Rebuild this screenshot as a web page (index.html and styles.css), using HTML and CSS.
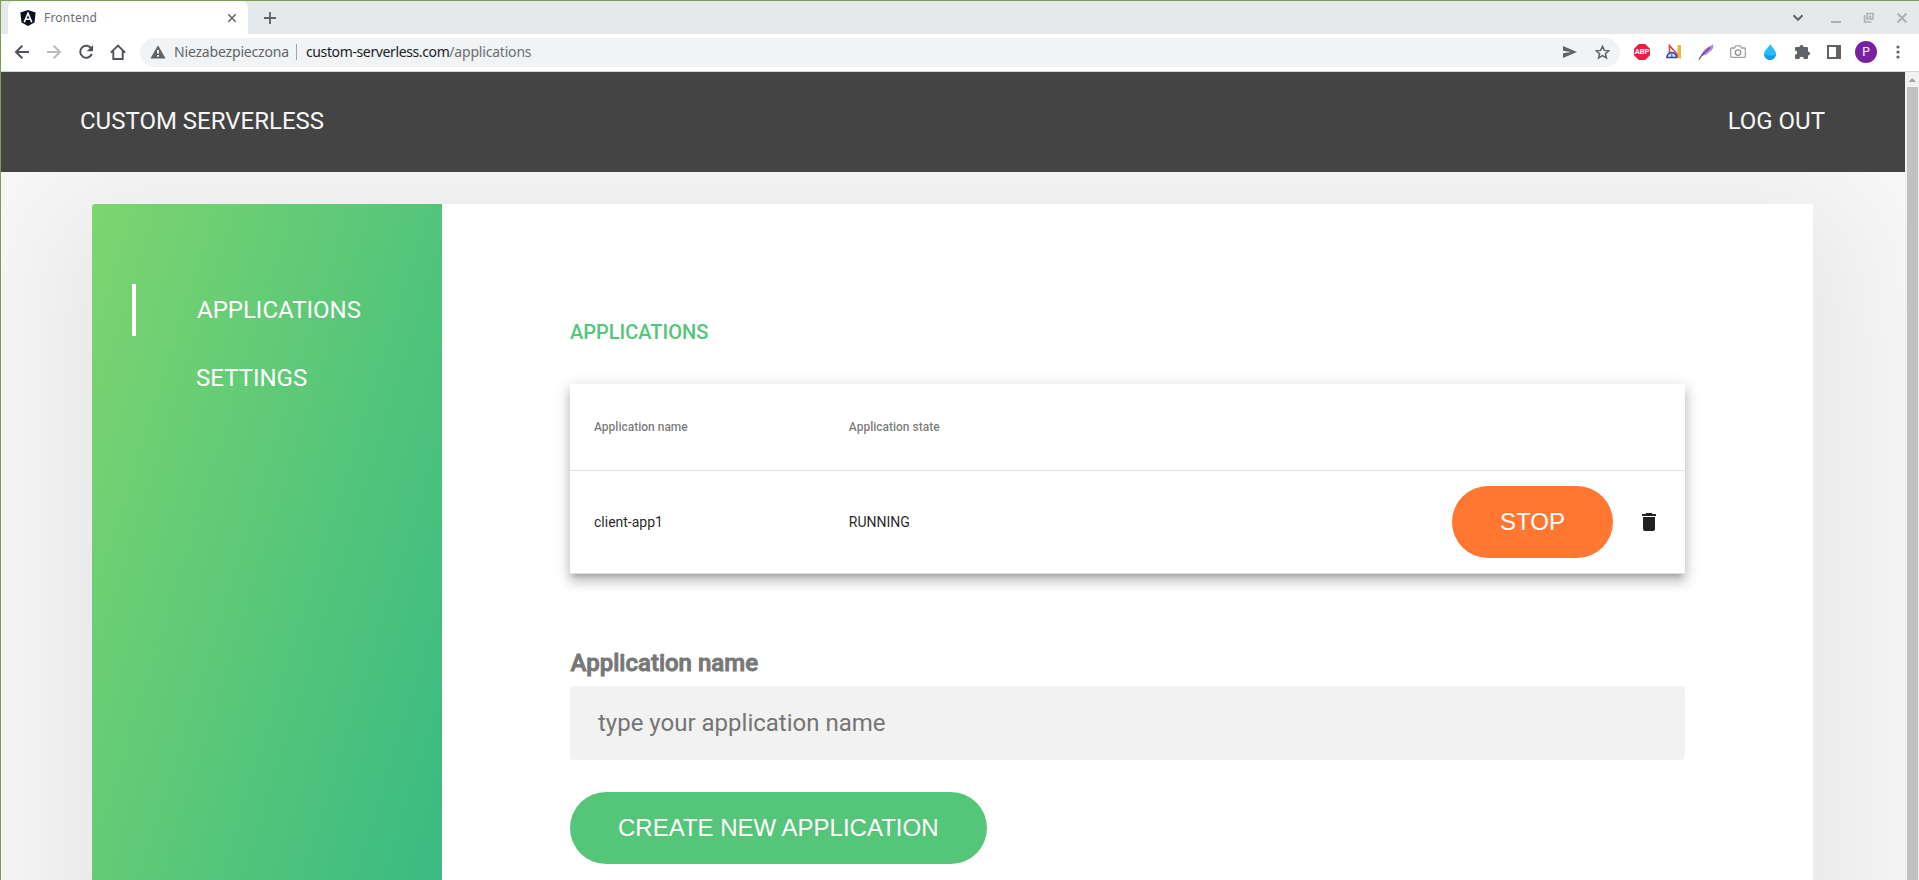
FILE: index.html
```html
<!DOCTYPE html>
<html lang="pl">
<head>
<meta charset="utf-8">
<title>Frontend</title>
<link rel="stylesheet" href="styles.css">
</head>
<body>
<div class="window">
  <div class="tabstrip">
    <div class="tab">
      <svg class="tab-logo" width="16" height="16" viewBox="0 0 16 16"><path d="M8 0l7.600 2.600-1.100 10L8 16l-6.500-3.400L.4 2.600z" fill="#0b0f1c"/><path d="M4.200 12.200L8 3.200l3.800 9M5.700 9.300h4.600" fill="none" stroke="#fff" stroke-width="1.600"/></svg>
      <span class="tab-title">Frontend</span>
      <svg class="tab-close" width="10" height="10" viewBox="0 0 10 10"><path d="M1.300 1.300l7.400 7.400M8.700 1.300L1.300 8.700" stroke="#5f6368" stroke-width="1.500"/></svg>
    </div>
    <svg class="newtab" width="12" height="12" viewBox="0 0 12 12"><path d="M6 0v12M0 6h12" stroke="#5f6368" stroke-width="1.800"/></svg>
    <div class="controls">
      <svg width="12" height="12" viewBox="0 0 12 12"><path d="M1.500 3.300L6 7.800l4.500-4.500" fill="none" stroke="#5f6368" stroke-width="2"/></svg>
      <svg width="12" height="12" viewBox="0 0 12 12"><path d="M1 10h10" stroke="#aeb1b4" stroke-width="2"/></svg>
      <svg width="12" height="12" viewBox="0 0 12 12"><path d="M4 1.500h6v5.500H4zM1.500 3V10H8.500M6.500 3.500v1.500h2" fill="none" stroke="#aeb1b4" stroke-width="1.600"/></svg>
      <svg width="12" height="12" viewBox="0 0 12 12"><path d="M1.500 1.500l9 9M10.500 1.500l-9 9" stroke="#aeb1b4" stroke-width="2"/></svg>
    </div>
  </div>
  <div class="toolbar">
    <div class="nav-icons">
      <svg width="16" height="16" viewBox="0 0 16 16"><path d="M15 8H2.500M8.300 1.700L2 8l6.300 6.300" fill="none" stroke="#50545a" stroke-width="2"/></svg>
      <svg width="16" height="16" viewBox="0 0 16 16"><path d="M1 8h12.500M7.700 1.700L14 8l-6.300 6.300" fill="none" stroke="#babcbe" stroke-width="2"/></svg>
      <svg width="16" height="16" viewBox="0 0 16 16"><path d="M13.300 4.500A6 6 0 1 0 13.800 10" fill="none" stroke="#50545a" stroke-width="2"/><path d="M15 1v6.300H8.700z" fill="#50545a"/></svg>
      <svg width="16" height="16" viewBox="0 0 16 16"><path d="M.8 8.700L8 1.500l7.200 7.200M3.300 7v8h9.400V7" fill="none" stroke="#50545a" stroke-width="1.900"/></svg>
    </div>
    <div class="omnibox">
      <svg class="warn" width="16" height="14" viewBox="0 0 16 14"><path d="M8 .3L15.600 13.500H.4z" fill="#5f6368"/><path d="M8 5v3.500M8 10v1.800" stroke="#fff" stroke-width="1.800"/></svg>
      <span class="insecure">Niezabezpieczona</span>
      <span class="sep"></span>
      <span class="host">custom-serverless.com</span><span class="path">/applications</span>
      <svg class="send" width="14" height="12" viewBox="0 0 14 12"><path d="M0 0l14 6L0 12V7.300L8 6 0 4.700z" fill="#5f6368"/></svg>
      <svg width="15" height="15" viewBox="0 0 15 15"><path d="M7.500 1.400l1.800 4 4.400.4-3.300 2.900 1 4.300-3.900-2.300L3.600 13l1-4.300L1.300 5.800l4.400-.4z" fill="none" stroke="#5f6368" stroke-width="1.500"/></svg>
    </div>
    <div class="extensions">
      <span class="abp">ABP</span>
      <svg width="16" height="16" viewBox="0 0 16 16"><path d="M3.500 1.500v11h9.500z" fill="#fff" stroke="#d9434a" stroke-width="1.600"/><path d="M11.500 1h3.500v13.500h-3.500z" fill="#e8b93c"/><path d="M1 13.500a4.800 4.800 0 0 1 9.600 0z" fill="#dfe8fb" stroke="#2747a0" stroke-width="1.700"/><path d="M5.800 10v3.500" stroke="#2747a0"/></svg>
      <svg width="16" height="16" viewBox="0 0 16 16"><path d="M15.300.3c.5 3.200-.8 5.700-3.300 7.300l-3.600 3-4.900 1.600c.2-3.500 1.800-6.200 5-8.300z" fill="#b58bd8"/><path d="M1 15.500L4 11l8-7.500" fill="none" stroke="#6b3d95" stroke-width="1.300"/></svg>
      <svg width="16" height="16" viewBox="0 0 16 16"><path d="M1.800 4h2.700l1.200-2.200h4.600L11.500 4h2.700q1.200 0 1.200 1.200v7q0 1.200-1.200 1.200H1.800Q.6 13.400.6 12.200v-7Q.6 4 1.800 4z" fill="#fff" stroke="#a1a3a6" stroke-width="1.300"/><circle cx="8" cy="8.600" r="2.700" fill="none" stroke="#909396" stroke-width="1.300"/></svg>
      <svg width="16" height="16" viewBox="0 0 16 16"><path d="M8.300.2C10.500 4 14 6.300 14 10a6 5.900 0 0 1-12 0C2 6.300 6.200 4 8.300.2z" fill="#28bdf5"/><path d="M2 10a6 5.900 0 0 0 12 0c-3 2.500-8 2-12 0z" fill="#159be8"/></svg>
      <svg width="16" height="16" viewBox="0 0 16 16"><path d="M1 4q0-1 1-1h3.500a2 2 0 1 1 4 0H13q1 0 1 1v3.500a2 2 0 1 1 0 4V14q0 1-1 1H9.800a2.200 2.200 0 1 0-4.400 0H2q-1 0-1-1v-3.200a2.200 2.200 0 1 0 0-4.400z" fill="#5f6368"/></svg>
      <svg width="16" height="16" viewBox="0 0 16 16"><path d="M1 1h14v14H1z" fill="#5f6368"/><path d="M3 3h7v10H3z" fill="#fff"/></svg>
      <span class="avatar">P</span>
      <svg class="dots" width="4" height="14" viewBox="0 0 4 14"><circle cx="2" cy="2" r="1.600"/><circle cx="2" cy="7" r="1.600"/><circle cx="2" cy="12" r="1.600"/></svg>
    </div>
  </div>
  <div class="viewport">
    <div class="page">
      <header class="header"><a>CUSTOM SERVERLESS</a><a>LOG OUT</a></header>
      <main class="card">
        <nav class="menu">
          <a class="menu-item active">APPLICATIONS</a>
          <a class="menu-item">SETTINGS</a>
        </nav>
        <section class="content">
          <h2 class="heading">APPLICATIONS</h2>
          <div class="table">
            <div class="row head"><span>Application name</span><span>Application state</span></div>
            <div class="row">
              <span>client-app1</span><span>RUNNING</span>
              <button class="btn stop">STOP</button>
              <svg width="24" height="24" viewBox="0 0 24 24"><path d="M6 19c0 1.100.9 2 2 2h8c1.100 0 2-.9 2-2V7H6v12zM19 4h-3.500l-1-1h-5l-1 1H5v2h14V4z" fill="#212121"/></svg>
            </div>
          </div>
          <label class="label" for="name">Application name</label>
          <input class="input" id="name" placeholder="type your application name">
          <button class="btn create">CREATE NEW APPLICATION</button>
        </section>
      </main>
    </div>
    <div class="scrollbar">
      <svg width="14" height="15" viewBox="0 0 14 15"><path d="M3.500 10h7.500L7.200 6z" fill="#a3a3a3"/></svg>
      <div class="thumb"></div>
    </div>
  </div>
</div>
</body>
</html>
```
FILE: styles.css
```css
* { box-sizing: border-box; margin: 0; padding: 0; }
body { height: 880px; overflow: hidden; font-family: Roboto, sans-serif; }
svg { display: block; flex: none; }
.window { height: 880px; display: flex; flex-direction: column; border-left: 1px solid #7a9f52; border-top: 1px solid #7a9f52; }

.tabstrip { height: 33px; display: flex; align-items: center; background: #e5e9ec; padding-left: 7px; flex: none; }
.tab { width: 240px; height: 33px; background: #fff; border-radius: 7px 7px 0 0; display: flex; align-items: center; padding: 0 11px 0 12px; }
.tab-title { margin-left: 8px; flex: 1; font: 12px "Noto Sans", sans-serif; color: #6b6e72; letter-spacing: 0.2px; }
.newtab { margin-left: 16px; }
.controls { margin-left: auto; display: flex; padding-right: 11px; gap: 21px; }
.controls svg:first-child { margin-right: 5px; }

.toolbar { height: 38px; display: flex; align-items: center; background: #fff; border-bottom: 1px solid #d4d6d8; flex: none; padding: 0 0 1px 13px; }
.nav-icons { display: flex; gap: 16px; }
.omnibox { margin-left: 14px; width: 1480px; height: 29px; border-radius: 15px; background: #f1f3f4; display: flex; align-items: center; padding: 0 10px; font: 14px/28px "Noto Sans", sans-serif; }
.warn { margin-right: 8px; }
.insecure { color: #5f6368; width: 114px; white-space: nowrap; letter-spacing: -0.18px; }
.sep { width: 1px; height: 16px; background: #a0a3a6; margin: 0 9px 0 8px; }
.host { color: #202124; letter-spacing: -0.38px; }
.path { color: #6b6e72; letter-spacing: -0.2px; }
.send { margin-left: auto; margin-right: 18px; }
.extensions { display: flex; align-items: center; gap: 16px; margin-left: 14px; }
.abp { width: 16px; height: 16px; background: #ed1e45; clip-path: polygon(30% 0, 70% 0, 100% 30%, 100% 70%, 70% 100%, 30% 100%, 0 70%, 0 30%); font: bold 7.500px/16px Roboto, sans-serif; letter-spacing: -0.1px; color: #fff; text-align: center; }
.avatar { width: 22px; height: 22px; margin: 0 -3px; border-radius: 50%; background: #7b1fa2; color: #fff; font: 12px/22px Roboto, sans-serif; text-align: center; }
.dots { margin-left: 6px; fill: #5f6368; }

.viewport { flex: 1; min-height: 0; display: flex; }
.page { flex: 1; background: #f7f7f7; overflow: hidden; }
.header { height: 100px; background: #444; color: #f7f7f7; display: flex; justify-content: space-between; align-items: center; padding: 0 80px 2px 79px; font-size: 24px; position: relative; z-index: 1; }
.card { margin: 32px 92px 0 91px; height: 1120px; display: flex; background: #fff; border-radius: 3px; overflow: hidden; box-shadow: 0 36px 120px 38px rgba(0, 0, 0, 0.065); }
.menu { width: 350px; background: linear-gradient(to bottom right, #7dd56f, #28b487); padding: 80px 0 0 40px; display: flex; flex-direction: column; gap: 16px; }
.menu-item { height: 52px; padding-left: 64px; display: flex; align-items: center; color: #fff; font-size: 24px; }
.menu-item.active { border-left: 4px solid #fff; padding-left: 61px; }
.content { flex: 1; padding: 112px 128px 0; display: flex; flex-direction: column; align-items: flex-start; }
.heading { font-size: 20px; font-weight: 500; line-height: 32px; color: #55c57a; }
.table { width: 100%; margin-top: 36px; height: 190px; background: #fff; box-shadow: 0 5px 5px -3px rgba(0,0,0,.2), 0 8px 10px 1px rgba(0,0,0,.14), 0 3px 14px 2px rgba(0,0,0,.12); }
.row { display: grid; grid-template-columns: 254.800px 1fr auto 24px; align-items: center; column-gap: 0; height: 103px; padding: 0 24px; border-bottom: 1px solid #e0e0e0; font-size: 14px; color: rgba(0, 0, 0, 0.87); }
.row.head { height: 87px; font-size: 12px; font-weight: 500; color: rgba(0, 0, 0, 0.54); }
.btn { border: 0; height: 72px; border-radius: 36px; padding: 0 48px; font: 24px "Liberation Sans", Arial, sans-serif; color: #fff; }
.stop { background: #ff7730; margin-right: 24px; }
.create { background: #55c57a; margin-top: 32px; }
.label { margin-top: 73px; padding-left: 0.5px; font-size: 24px; line-height: 32px; font-weight: 500; color: #777; -webkit-text-stroke: 0.9px #777; }
.input { width: 100%; height: 74px; margin-top: 7px; border: 0; border-radius: 4px; background: #f2f2f2; padding: 0 28px; font: 24px Roboto, sans-serif; }
.input::placeholder { color: #757575; }
.scrollbar { width: 14px; background: #f1f1f1; display: flex; flex-direction: column; }
.thumb { flex: 1; margin: 0 1px 0 2px; background: #c1c1c1; }
```
